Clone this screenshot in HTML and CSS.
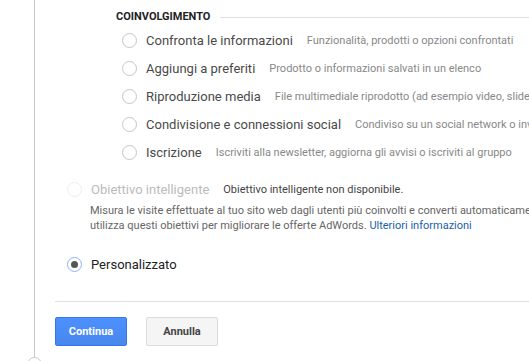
FILE: index.html
```html
<!DOCTYPE html>
<html lang="it">

<head>
    <meta charset="UTF-8">
    <meta name="viewport" content="width=device-width, initial-scale=1.0">
    <title>Obiettivi</title>
    <link rel="stylesheet" href="styles.css">
</head>

<body>
    <div class="rail">
        <div class="step">
            <section class="group">
                <h3 class="group-title"><span>COINVOLGIMENTO</span></h3>
                <div class="option">
                    <span class="radio"></span>
                    <span class="label">Confronta le informazioni</span>
                    <span class="desc">Funzionalità, prodotti o opzioni confrontati</span>
                </div>
                <div class="option">
                    <span class="radio"></span>
                    <span class="label">Aggiungi a preferiti</span>
                    <span class="desc">Prodotto o informazioni salvati in un elenco</span>
                </div>
                <div class="option">
                    <span class="radio"></span>
                    <span class="label">Riproduzione media</span>
                    <span class="desc">File multimediale riprodotto (ad esempio video, slideshow o prodotto)</span>
                </div>
                <div class="option">
                    <span class="radio"></span>
                    <span class="label">Condivisione e connessioni social</span>
                    <span class="desc">Condiviso su un social network o inviato via email</span>
                </div>
                <div class="option">
                    <span class="radio"></span>
                    <span class="label">Iscrizione</span>
                    <span class="desc">Iscriviti alla newsletter, aggiorna gli avvisi o iscriviti al gruppo</span>
                </div>
            </section>

            <div class="option top-option smart">
                <span class="radio disabled"></span>
                <span class="label">Obiettivo intelligente</span>
                <span class="desc">Obiettivo intelligente non disponibile.</span>
            </div>
            <p class="help">
                Misura le visite effettuate al tuo sito web dagli utenti più coinvolti e converti automaticamente queste visite in obiettivi. Quindi<br>
                utilizza questi obiettivi per migliorare le offerte AdWords. <a href="#">Ulteriori informazioni</a>
            </p>

            <div class="option top-option custom">
                <span class="radio checked"></span>
                <span class="label">Personalizzato</span>
            </div>

            <div class="actions">
                <button class="btn btn-primary">Continua</button>
                <button class="btn">Annulla</button>
            </div>
        </div>
        <span class="rail-end"></span>
    </div>
</body>

</html>
```

FILE: styles.css
```css
body {
    margin: 0;
    font-family: Roboto, "Liberation Sans", Arial, sans-serif;
    background: #fff;
    overflow: hidden;
}

.rail {
    position: relative;
    margin-left: 34px;
    height: 361px;
    border-left: 1px solid #c8c8c8;
}

.rail-end {
    position: absolute;
    left: -8px;
    top: 357px;
    width: 13px;
    height: 13px;
    border: 1px solid #c8c8c8;
    border-radius: 50%;
    background: #fff;
}

.step {
    padding-left: 20px;
    padding-top: 10px;
}

.group {
    margin-left: 61px;
}

.group-title {
    display: flex;
    align-items: center;
    gap: 10px;
    margin: 0 0 2px;
    font-size: 11px;
    line-height: 14px;
    font-weight: bold;
    color: #222;
}

.group-title::after {
    content: "";
    flex: 1;
    border-top: 1px solid #e0e0e0;
}

.group .option {
    margin-left: 6px;
}

.option {
    display: flex;
    align-items: center;
    height: 28px;
    white-space: nowrap;
}

.radio {
    flex: none;
    position: relative;
    width: 13px;
    height: 13px;
    border: 1px solid #c6c6c6;
    border-radius: 50%;
    margin-right: 9px;
}

.radio.disabled {
    border-color: #eee;
}

.radio.checked {
    border-color: #8ab4f8;
}

.radio.checked::after {
    content: "";
    position: absolute;
    left: 3px;
    top: 3px;
    width: 7px;
    height: 7px;
    border-radius: 50%;
    background: #555;
}

.label {
    font-size: 13px;
    color: #4a4a4a;
    margin-right: 14px;
}

.desc {
    font-size: 11px;
    color: #888;
}

.top-option {
    margin-left: 12px;
}

.smart {
    margin-top: 9px;
}

.smart .label {
    color: #bbb;
}

.smart .desc {
    color: #444;
}

.help {
    margin: 0 0 0 35px;
    font-size: 11px;
    line-height: 15px;
    color: #666;
    white-space: nowrap;
}

.help a {
    color: #1a5fa8;
    text-decoration: none;
}

.custom {
    margin-top: 17px;
}

.custom .label {
    color: #222;
}

.actions {
    display: flex;
    gap: 19px;
    margin-top: 23px;
    padding-top: 15px;
    border-top: 1px solid #e0e0e0;
}

.btn {
    width: 72px;
    height: 29px;
    font-family: Roboto, Arial, sans-serif;
    font-size: 11px;
    font-weight: bold;
    color: #444;
    background: #f5f5f5;
    border: 1px solid #dcdcdc;
    border-radius: 2px;
}

.btn-primary {
    color: #fff;
    background: linear-gradient(#4d90fe, #4787ed);
    border-color: #3079ed;
}
```
